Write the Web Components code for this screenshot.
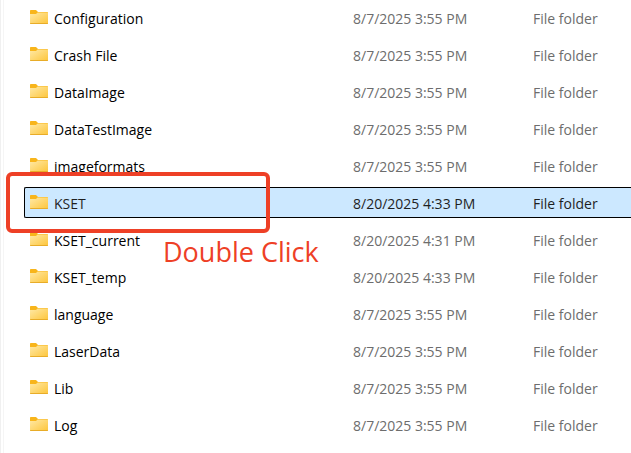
<!DOCTYPE html>
<html lang="en">
<head>
<meta charset="utf-8">
<title>Files</title>
<style>
  body {
    margin: 0;
    background: #fff;
    font-family: "Segoe UI", "Open Sans", "Noto Sans", sans-serif;
    overflow: hidden;
  }
</style>
</head>
<body>
<explorer-pane>
  <file-list selected="KSET">
    <click-callout slot="callout">Double Click</click-callout>
  </file-list>
</explorer-pane>

<script>
class ExplorerPane extends HTMLElement {
  constructor() {
    super();
    this.attachShadow({ mode: "open" });
    this.shadowRoot.innerHTML = `
      <style>
        :host {
          display: flex;
          min-height: 100vh;
        }
        .splitter {
          flex: none;
          width: 1px;
          background: #f0f0f0;
          border-right: 2px solid #fff;
        }
        main {
          flex: 1;
          min-width: 0;
          border-left: 1px solid #f5f5f5;
          padding-left: 20px;
        }
      </style>
      <div class="splitter"></div>
      <main><slot></slot></main>
    `;
  }
}

class FolderIcon extends HTMLElement {
  constructor() {
    super();
    this.attachShadow({ mode: "open" });
    this.shadowRoot.innerHTML = `
      <style>
        :host { display: block; flex: none; width: 18px; height: 18px; }
        svg { display: block; }
      </style>
      <svg width="18" height="18" viewBox="0 0 18 18" aria-hidden="true">
        <defs>
          <linearGradient id="front" x1="0" y1="0" x2="1" y2="1">
            <stop offset="0" stop-color="#ffe9a6"/>
            <stop offset="1" stop-color="#fdc53a"/>
          </linearGradient>
        </defs>
        <path d="M0 .8Q0 0 .8 0H6L8 2H17.2Q18 2 18 2.8V8H0Z" fill="#f8b51b"/>
        <path d="M0 4H6L7.6 2.6H18V13.2Q18 14 17.2 14H.8Q0 14 0 13.2Z" fill="url(#front)"/>
        <path d="M0 13H18V13.2Q18 14 17.2 14H.8Q0 14 0 13.2Z" fill="#e8ac28"/>
      </svg>
    `;
  }
}

class ClickCallout extends HTMLElement {
  constructor() {
    super();
    this.attachShadow({ mode: "open" });
    // frame around the row, label hangs off its lower edge
    this.shadowRoot.innerHTML = `
      <style>
        :host {
          position: absolute;
          z-index: 1;
          top: -16px;
          left: -19px;
          width: 264px;
          height: 61px;
          box-sizing: border-box;
          border: 4px solid #ee4026;
          border-radius: 6px;
          color: #ee4026;
          pointer-events: none;
        }
        .label {
          position: absolute;
          top: 56px;
          left: 153px;
          font-size: 27px;
          line-height: 40px;
          white-space: nowrap;
        }
      </style>
      <span class="label"><slot></slot></span>
    `;
  }
}

class FileList extends HTMLElement {
  constructor() {
    super();
    this.attachShadow({ mode: "open" });
  }

  connectedCallback() {
    this.render();
  }

  render() {
    const selected = this.getAttribute("selected");
    const files = [
      { name: "Configuration", date: "8/7/2025 3:55 PM" },
      { name: "Crash File", date: "8/7/2025 3:55 PM" },
      { name: "DataImage", date: "8/7/2025 3:55 PM" },
      { name: "DataTestImage", date: "8/7/2025 3:55 PM" },
      { name: "imageformats", date: "8/7/2025 3:55 PM" },
      { name: "KSET", date: "8/20/2025 4:33 PM" },
      { name: "KSET_current", date: "8/20/2025 4:31 PM" },
      { name: "KSET_temp", date: "8/20/2025 4:33 PM" },
      { name: "language", date: "8/7/2025 3:55 PM" },
      { name: "LaserData", date: "8/7/2025 3:55 PM" },
      { name: "Lib", date: "8/7/2025 3:55 PM" },
      { name: "Log", date: "8/7/2025 3:55 PM" },
    ];

    this.shadowRoot.innerHTML = `
      <style>
        :host {
          display: block;
          font-size: 14px;
          line-height: 20px;
        }
        table {
          width: 100%;
          table-layout: fixed;
          border-collapse: separate;
          border-spacing: 0 6px;
          margin-top: -4px;
        }
        .name { width: 329px; }
        .date { width: 180px; }
        td {
          box-sizing: border-box;
          height: 31px;
          padding: 3px 0 0;
          border: 1px solid transparent;
          border-width: 1px 0;
          color: #6d6d6d;
          white-space: nowrap;
        }
        td:first-child {
          position: relative;
          border-left-width: 1px;
          color: #000;
        }
        .cell {
          display: flex;
          align-items: center;
          gap: 6px;
          padding-left: 5px;
        }
        .selected td {
          background: #cce8ff;
          border-color: #000;
          color: #1f1f1f;
        }
        .selected td:first-child {
          border-radius: 2px 0 0 2px;
        }
      </style>
      <table>
        <colgroup><col class="name"><col class="date"><col></colgroup>
        <tbody>
          ${files
            .map(
              (file) => `
            <tr class="${file.name === selected ? "selected" : ""}">
              <td>
                <div class="cell"><folder-icon></folder-icon><span>${file.name}</span></div>
                ${file.name === selected ? `<slot name="callout"></slot>` : ""}
              </td>
              <td>${file.date}</td>
              <td>File folder</td>
            </tr>
          `
            )
            .join("")}
        </tbody>
      </table>
    `;
  }
}

customElements.define("explorer-pane", ExplorerPane);
customElements.define("folder-icon", FolderIcon);
customElements.define("click-callout", ClickCallout);
customElements.define("file-list", FileList);
</script>
</body>
</html>
